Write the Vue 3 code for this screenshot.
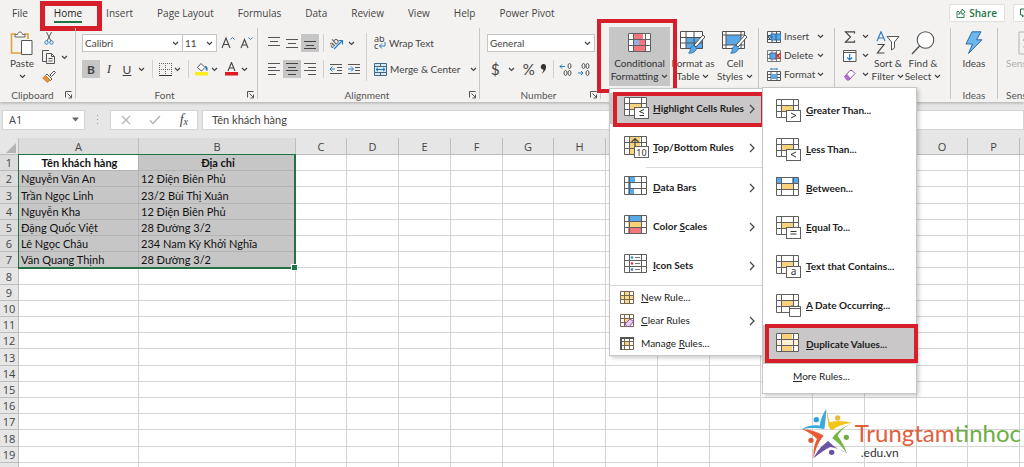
<script setup>
import { ref } from 'vue'

const tabs = ['File', 'Home', 'Insert', 'Page Layout', 'Formulas', 'Data', 'Review', 'View', 'Help', 'Power Pivot']
const columns = 'ABCDEFGHIJKLMNOPQR'.split('')
const records = [
  ['Tên khách hàng', 'Địa chỉ'],
  ['Nguyễn Văn An', '12 Điện Biên Phủ'],
  ['Trần Ngọc Linh', '23/2 Bùi Thị Xuân'],
  ['Nguyễn Kha', '12 Điện Biên Phủ'],
  ['Đặng Quốc Việt', '28 Đường 3/2'],
  ['Lê Ngọc Châu', '234 Nam Kỳ Khởi Nghĩa'],
  ['Văn Quang Thịnh', '28 Đường 3/2'],
]
const rowCount = 20
const formula = ref('Tên khách hàng')
const cellName = ref('A1')

const Y = '#fbd27c'
const B = '#5aa9e6'
const R = '#f4777f'
const base = [[5, 6, 12, 6, Y]]

const ruleItems = [
  { pre: '', key: 'H', post: 'ighlight Cells Rules', fills: base, badge: 'le', more: true, active: true },
  { pre: '', key: 'T', post: 'op/Bottom Rules', fills: [[6, 0, 10, 18, Y]], badge: '10', arrow: true, more: true },
  { pre: '', key: 'D', post: 'ata Bars', fills: [[4, 0, 7, 6, B], [4, 6, 3, 6, B], [4, 12, 6, 6, B]], more: true, sep: true },
  { pre: 'Color ', key: 'S', post: 'cales', fills: [[4, 0, 14, 6, B], [4, 6, 14, 6, Y], [4, 12, 14, 6, R]], more: true },
  { pre: '', key: 'I', post: 'con Sets', fills: [[4, 0, 14, 18, '#fff']], dots: true, more: true },
]
const smallItems = [
  { pre: '', key: 'N', post: 'ew Rule...', kind: 'new' },
  { pre: '', key: 'C', post: 'lear Rules', kind: 'clear', more: true },
  { pre: 'Manage ', key: 'R', post: 'ules...', kind: 'manage' },
]
const highlightItems = [
  { key: 'G', post: 'reater Than...', fills: base, badge: 'gt' },
  { key: 'L', post: 'ess Than...', fills: base, badge: 'lt' },
  { key: 'B', post: 'etween...', fills: [[0, 0, 6, 6, B], [16, 0, 6, 6, B], [5, 6, 12, 6, Y]] },
  { key: 'E', post: 'qual To...', fills: base, badge: 'eq' },
  { key: 'T', post: 'ext that Contains...', fills: base, badge: 'a' },
  { key: 'A', post: ' Date Occurring...', fills: base, badge: 'date' },
  { key: 'D', post: 'uplicate Values...', fills: [[6, 0, 10, 6, Y], [6, 12, 10, 6, Y], [0, 6, 22, 6, '#fdf1d8']], active: true },
]
const badgePaths = {
  le: 'M20 12.5l-4.500 2 4.500 2M15.500 18.500h4.500',
  gt: 'M15 13l5 2.500-5 2.500',
  lt: 'M20 13l-5 2.500 5 2.500',
  eq: 'M14.500 14.500h6M14.500 17h6',
}
</script>

<template>
  <div class="app">
    <svg class="defs" aria-hidden="true">
      <symbol id="chev" viewBox="0 0 7 5"><path d="M1 1l2.500 2.500L6 1" fill="none" stroke="#444" stroke-width="1.200" /></symbol>
      <symbol id="launch" viewBox="0 0 8 8"><path d="M.5 6.500v-6h6M2.500 2.500l4 4M6.500 3.500v3.500H3.500" fill="none" stroke="#555" /></symbol>
      <symbol id="cells" viewBox="0 0 23 19">
        <path d="M.5.5h22v18H.5zM.5 6.500h22M.5 12.500h22M5.500.5v18M17.500.5v18" fill="none" stroke="#5f5f5f" />
      </symbol>
    </svg>

    <header class="ribbon">
      <nav class="tabs">
        <button v-for="t in tabs" :key="t" class="tab" :class="{ current: t === 'Home' }">
          {{ t }}<span v-if="t === 'Home'" class="mark home-mark"></span>
        </button>
        <span class="grow"></span>
        <button class="share">
          <svg width="10" height="10" viewBox="0 0 10 10"><path d="M3 3.500H1v6h7V6M2.800 6.500C3 4 4.500 3 6 3V1l3.200 3L6 6.500V4.700C4.500 4.700 3.500 5.200 2.800 6.500z" fill="none" stroke="#217346" stroke-width=".9" /></svg>
          Share
        </button>
        <button class="share comments" aria-label="Comments">
          <svg width="10" height="10" viewBox="0 0 10 10"><path d="M.5 1h9v6H4.500l-2 2V7H.5z" fill="none" stroke="#217346" /></svg>
        </button>
      </nav>

      <div class="groups">
        <section class="group clipboard">
          <div class="body">
            <button class="big">
              <svg width="24" height="24" viewBox="0 0 24 24">
                <path d="M6 3H1.500v19H11" fill="none" stroke="#e2a33a" stroke-width="1.600" />
                <path d="M14 3h4v5" fill="none" stroke="#e2a33a" stroke-width="1.600" />
                <path d="M5 6V3.500h2.500C8 .2 12 .2 12.500 3.500H15V6z" fill="#f8f8f8" stroke="#666" />
                <path d="M11.500 9.500h10.500v14H11.500z" fill="#fff" stroke="#555" />
              </svg>
              <span>Paste</span>
              <svg class="chev"><use href="#chev" /></svg>
            </button>
            <div class="stack">
              <button aria-label="Cut"><svg width="14" height="13" viewBox="0 0 14 13"><path d="M4.500 0l4.500 9M9.500 0L5 9" stroke="#555" fill="none" /><circle cx="4.500" cy="10.500" r="1.700" fill="none" stroke="#2b7cc4" /><circle cx="9.500" cy="10.500" r="1.700" fill="none" stroke="#2b7cc4" /></svg></button>
              <button aria-label="Copy"><svg width="14" height="14" viewBox="0 0 14 14"><path d="M4.500 11.500h-4V.5H7M4.500 3.500h5l3 3v7h-8z" fill="none" stroke="#555" /><path d="M9.500 3.500v3h3M6.500 8.500h4M6.500 11h4" fill="none" stroke="#555" /></svg><svg class="chev"><use href="#chev" /></svg></button>
              <button aria-label="Format Painter"><svg width="14" height="13" viewBox="0 0 14 13"><path d="M8 5l4-4 1.500 1.500-4 4z" fill="#fff" stroke="#555" /><path d="M5 4l5 5-1.500 1.500-5-5z" fill="#fff" stroke="#555" /><path d="M3.500 5.500L.8 8l4.500 4.500 2.700-2.300z" fill="#e8923a" stroke="#d97f24" /></svg></button>
            </div>
          </div>
          <footer><span>Clipboard</span><svg class="launch"><use href="#launch" /></svg></footer>
        </section>

        <section class="group font">
          <div class="body lines">
            <div class="line fields">
              <label class="combo face"><select aria-label="Font"><option>Calibri</option></select><svg class="chev"><use href="#chev" /></svg></label>
              <label class="combo size"><select aria-label="Font size"><option>11</option></select><svg class="chev"><use href="#chev" /></svg></label>
              <button class="grow-a" aria-label="Increase font size"><svg width="14" height="14" viewBox="0 0 14 14"><path d="M1 12L5 2l4 10M2.500 8.500h5" fill="none" stroke="#444" stroke-width="1.100" /><path d="M9.500 3.500L11.500 1.500l2 2" fill="none" stroke="#2b7cc4" /></svg></button>
              <button aria-label="Decrease font size"><svg width="13" height="14" viewBox="0 0 13 14"><path d="M1 12L4.500 3.500 8 12M2.500 9h4" fill="none" stroke="#444" stroke-width="1.100" /><path d="M8.500 1.500l2 2 2-2" fill="none" stroke="#2b7cc4" /></svg></button>
            </div>
            <div class="line font-tools">
              <button class="sq on bold">B</button>
              <button class="sq italic">I</button>
              <button class="sq under">U</button>
              <svg class="chev"><use href="#chev" /></svg>
              <i class="rule"></i>
              <button aria-label="Borders"><svg width="13" height="13" viewBox="0 0 13 13"><path d="M.5 0v12M12.500 0v12M0 .5h13M0 6.500h13M6.500 0v12" fill="none" stroke="#666" stroke-dasharray="1 1" /><path d="M0 12.500h13" stroke="#333" /></svg></button>
              <svg class="chev"><use href="#chev" /></svg>
              <i class="rule"></i>
              <button aria-label="Fill color"><svg width="14" height="14" viewBox="0 0 14 14"><path d="M6 1.500L10 5.500 6.500 9 2.500 5.500z" fill="#fff" stroke="#555" /><path d="M10 4.500c2 .5 2 2 1.500 4" fill="none" stroke="#2b7cc4" stroke-width="1.800" /><path d="M0 10h13v3.500H0z" fill="#f8ee1c" /></svg></button>
              <svg class="chev"><use href="#chev" /></svg>
              <button aria-label="Font color"><svg width="14" height="14" viewBox="0 0 14 14"><path d="M3 9l3.500-8.500L10 9M4.200 6h4.600" fill="none" stroke="#444" stroke-width="1.100" /><path d="M0 10h13v3.500H0z" fill="#e01b24" /></svg></button>
              <svg class="chev"><use href="#chev" /></svg>
            </div>
          </div>
          <footer><span>Font</span><svg class="launch"><use href="#launch" /></svg></footer>
        </section>

        <section class="group align">
          <div class="body">
            <div class="lines">
              <div class="line">
                <button class="sq" aria-label="Top align"><svg width="12" height="12" viewBox="0 0 12 12"><path d="M0 .5h12M2 4.500h8M0 8.500h12" stroke="#555" /></svg></button>
                <button class="sq" aria-label="Middle align"><svg width="12" height="12" viewBox="0 0 12 12"><path d="M0 2.500h12M2 6.500h8M0 10.500h12" stroke="#555" /></svg></button>
                <button class="sq on" aria-label="Bottom align"><svg width="12" height="12" viewBox="0 0 12 12"><path d="M0 4.500h12M2 8.500h8M0 11.500h12" stroke="#444" /></svg></button>
                <i class="rule"></i>
                <button aria-label="Orientation"><svg width="14" height="14" viewBox="0 0 14 14"><text x="-1" y="9" transform="rotate(-40 5 7)" font-family="Noto Sans" font-size="9" fill="#444">ab</text><path d="M4 13L12 5M12.500 8.500V4.500H8.500" fill="none" stroke="#2b7cc4" stroke-width="1.200" /></svg></button>
                <svg class="chev"><use href="#chev" /></svg>
              </div>
              <div class="line">
                <button class="sq" aria-label="Align left"><svg width="12" height="12" viewBox="0 0 12 12"><path d="M0 .5h12M0 4.500h8M0 7.500h12M0 11.500h8" stroke="#555" /></svg></button>
                <button class="sq on" aria-label="Center"><svg width="12" height="12" viewBox="0 0 12 12"><path d="M0 .5h12M2 4.500h8M0 7.500h12M2 11.500h8" stroke="#444" /></svg></button>
                <button class="sq" aria-label="Align right"><svg width="12" height="12" viewBox="0 0 12 12"><path d="M0 .5h12M4 4.500h8M0 7.500h12M4 11.500h8" stroke="#555" /></svg></button>
                <i class="rule"></i>
                <button class="indent" aria-label="Decrease indent"><svg width="12" height="12" viewBox="0 0 12 12"><path d="M0 1.500h12M7 4.500h5M7 7.500h5M0 10.500h12" stroke="#555" /><path d="M0 6h5M2.500 3.500L0 6l2.500 2.500" fill="none" stroke="#2b7cc4" /></svg></button>
                <button class="indent" aria-label="Increase indent"><svg width="12" height="12" viewBox="0 0 12 12"><path d="M0 1.500h12M7 4.500h5M7 7.500h5M0 10.500h12" stroke="#555" /><path d="M0 6h5M3 3.500L5.500 6 3 8.500" fill="none" stroke="#2b7cc4" /></svg></button>
              </div>
            </div>
            <i class="rule tall"></i>
            <div class="lines wide">
              <button class="line label"><svg width="12" height="14" viewBox="0 0 12 14"><text x="0" y="6" font-family="Noto Sans" font-size="9" fill="#444">ab</text><text x="0" y="13" font-family="Noto Sans" font-size="9" fill="#444">c</text><path d="M11 6v4H5.500M8 7.500L5.500 10 8 12.500" fill="none" stroke="#2b7cc4" /></svg>Wrap Text</button>
              <button class="line label"><svg width="13" height="13" viewBox="0 0 13 13"><path d="M.5.5h12v12H.5zM.5 3.500h12M.5 9.500h12M6.500.5v3M6.500 9.500v3" fill="#d6ebfa" stroke="#44687f" /><path d="M2 6.500h9M4 4.800L2 6.500l2 1.700M9 4.800l2 1.700-2 1.700" fill="none" stroke="#1f74b8" /></svg>Merge &amp; Center<svg class="chev far"><use href="#chev" /></svg></button>
            </div>
          </div>
          <footer><span>Alignment</span><svg class="launch"><use href="#launch" /></svg></footer>
        </section>

        <section class="group number">
          <div class="body lines">
            <div class="line fields"><label class="combo general"><select aria-label="Number format"><option>General</option></select><svg class="chev"><use href="#chev" /></svg></label></div>
            <div class="line number-tools">
              <button class="sym">$</button>
              <svg class="chev"><use href="#chev" /></svg>
              <button class="sym">%</button>
              <button aria-label="Comma style"><svg width="8" height="12" viewBox="0 0 8 12"><path d="M3.500 1C7 .8 7.500 7 1.500 11c1.500-2 2-3 1.800-4.500C-.2 6.500 0 1.200 3.500 1z" fill="#333" /></svg></button>
              <i class="rule"></i>
              <button aria-label="Increase decimal"><svg width="13" height="13" viewBox="0 0 13 13"><path d="M1 3.500h5M3 1.500l-2 2 2 2" fill="none" stroke="#2b7cc4" /><g fill="none" stroke="#555"><ellipse cx="10.500" cy="3" rx="1.500" ry="2.500" /><ellipse cx="6.500" cy="10" rx="1.500" ry="2.500" /><ellipse cx="10.500" cy="10" rx="1.500" ry="2.500" /></g></svg></button>
              <button aria-label="Decrease decimal"><svg width="13" height="13" viewBox="0 0 13 13"><path d="M1 10h5M4 8l2 2-2 2" fill="none" stroke="#2b7cc4" /><g fill="none" stroke="#555"><ellipse cx="10.500" cy="3" rx="1.500" ry="2.500" /><ellipse cx="6.500" cy="3" rx="1.500" ry="2.500" /><ellipse cx="10.500" cy="10" rx="1.500" ry="2.500" /></g></svg></button>
            </div>
          </div>
          <footer><span>Number</span><svg class="launch"><use href="#launch" /></svg></footer>
        </section>

        <section class="group styles">
          <div class="body">
            <div class="anchor">
              <button class="big cf on">
                <svg width="23" height="19" viewBox="0 0 23 19"><path d="M0 0h23v19H0z" fill="#fff" /><path d="M5 0h10v6H5zM11 6h6v6h-6zM5 12h12v6H5z" fill="#f4777f" /><path d="M5 6h6v6H5z" fill="#8fb3e0" /><use href="#cells" /></svg>
                <span>Conditional</span>
                <span>Formatting <svg class="chev"><use href="#chev" /></svg></span>
              </button>

              <div class="menu rules" role="menu">
                <template v-for="m in ruleItems" :key="m.post">
                  <hr v-if="m.sep" class="inset" />
                  <button class="item" :class="{ hot: m.active }" role="menuitem">
                    <svg class="pic" viewBox="0 0 25 23">
                      <path d="M0 0h23v19H0z" fill="#fff" />
                      <rect v-for="(f, i) in m.fills" :key="i" :x="f[0]" :y="f[1]" :width="f[2]" :height="f[3]" :fill="f[4]" />
                      <use href="#cells" width="23" height="19" />
                      <path v-if="m.arrow" d="M11 13V3M7.500 6L11 2.500 14.500 6" fill="none" stroke="#444" stroke-width="1.200" />
                      <g v-if="m.dots"><path d="M6 1h11v5H6zM6 7h11v5H6zM6 13h11v5H6z" fill="#fff" /><path d="M11 3.500h5M11 9.500h5M11 15.500h5" stroke="#777" /><circle cx="8" cy="3.500" r="1.300" fill="#2b8cc4" /><circle cx="8" cy="9.500" r="1.300" fill="#d9303a" /><circle cx="8" cy="15.500" r="1.300" fill="#2b7cc4" /></g>
                      <rect v-if="m.badge" x="10.500" y="10.500" width="14" height="11" fill="#fff" stroke="#5f5f5f" />
                      <path v-if="m.badge === 'le'" :d="badgePaths.le" fill="none" stroke="#333" />
                      <text v-if="m.badge === '10'" x="17.500" y="19.500" text-anchor="middle" font-family="Noto Sans" font-weight="400" font-size="9" fill="#333">10</text>
                    </svg>
                    <span>{{ m.pre }}<u>{{ m.key }}</u>{{ m.post }}</span>
                    <svg v-if="m.more" class="go" viewBox="0 0 6 10"><path d="M1 1l4 4-4 4" fill="none" stroke="#444" stroke-width="1.200" /></svg>
                  </button>
                </template>
                <hr />
                <button v-for="m in smallItems" :key="m.post" class="item small" role="menuitem">
                  <svg class="mini" viewBox="0 0 14 13">
                    <path d="M.5.5h13v12H.5z" fill="#fff" /><path d="M4 4h6v5H4z" :fill="Y" />
                    <path v-if="m.kind === 'new'" d="M4 1h6v11H4zM1 4h12v5H1z" fill="#fbd98f" />
                    <path d="M.5.5h13v12H.5zM.5 4.500h13M.5 8.500h13M4.500.5v12M9.500.5v12" fill="none" stroke="#76664c" />
                    <path v-if="m.kind === 'manage'" d="M1 13V1h13" fill="none" stroke="#555" stroke-width="2" />
                    <path v-if="m.kind === 'clear'" d="M5 10l5-5 3.500 2.500-4 5H7z" fill="#e7cdf0" stroke="#9a49b5" />
                  </svg>
                  <span>{{ m.pre }}<u>{{ m.key }}</u>{{ m.post }}</span>
                  <svg v-if="m.more" class="go" viewBox="0 0 6 10"><path d="M1 1l4 4-4 4" fill="none" stroke="#444" stroke-width="1.200" /></svg>
                </button>
                <span class="mark rule-mark"></span>
              </div>

              <div class="menu conditions" role="menu">
                <button v-for="m in highlightItems" :key="m.post" class="item" :class="{ hot: m.active }" role="menuitem">
                  <svg class="pic" viewBox="0 0 25 23">
                    <path d="M0 0h23v19H0z" fill="#fff" />
                    <rect v-for="(f, i) in m.fills" :key="i" :x="f[0]" :y="f[1]" :width="f[2]" :height="f[3]" :fill="f[4]" />
                    <use href="#cells" width="23" height="19" />
                    <rect v-if="m.badge && m.badge !== 'date'" x="10.500" y="11.500" width="14" height="11" fill="#fff" stroke="#5f5f5f" />
                    <path v-if="badgePaths[m.badge]" :d="badgePaths[m.badge]" transform="translate(0 1)" fill="none" stroke="#333" />
                    <text v-if="m.badge === 'a'" x="17.500" y="20" text-anchor="middle" font-family="Noto Sans" font-weight="400" font-size="10" fill="#333">a</text>
                    <path v-if="m.badge === 'date'" d="M13.500 12.500h11v10h-11zM13.500 14.500h11M16 11v2M22 11v2" fill="#fff" stroke="#5f5f5f" />
                  </svg>
                  <span><u>{{ m.key }}</u>{{ m.post }}</span>
                  <span v-if="m.active" class="mark dup-mark"></span>
                </button>
                <button class="item small more" role="menuitem"><span><u>M</u>ore Rules...</span></button>
              </div>
            </div>
            <button class="big fat">
              <svg width="26" height="24" viewBox="0 0 26 24"><path d="M.5.5h22v17H.5z" fill="#fff" /><path d="M6 6h17v12H6z" fill="#5aa9e6" /><path d="M.5.5h22v17H.5zM.5 6.500h22M.5 12h22M6 .5v17M14 .5v17" fill="none" stroke="#505050" /><path d="M25 6L16 16l-2-2 9-10z" fill="#fff" stroke="#505050" /><path d="M14 14.500l2.500 2.500c0 3-4 6-8 5 2-1 1.500-2.500 2-5 .5-1.500 2-2.500 3.500-2.500z" fill="#5aa9e6" stroke="#2569a5" stroke-width=".8" /></svg>
              <span>Format as</span>
              <span>Table <svg class="chev"><use href="#chev" /></svg></span>
            </button>
            <button class="big cs">
              <svg width="26" height="24" viewBox="0 0 26 24"><path d="M.5.5h22v17H.5z" fill="#fff" /><path d="M4 4h15v10H4z" fill="#5aa9e6" /><path d="M.5.5h22v17H.5zM.5 4h22M.5 14h22M4 .5v17M19 .5v17" fill="none" stroke="#505050" /><path d="M25 6L16 16l-2-2 9-10z" fill="#fff" stroke="#505050" /><path d="M14 14.500l2.500 2.500c0 3-4 6-8 5 2-1 1.500-2.500 2-5 .5-1.500 2-2.500 3.500-2.500z" fill="#5aa9e6" stroke="#2569a5" stroke-width=".8" /></svg>
              <span>Cell</span>
              <span>Styles <svg class="chev"><use href="#chev" /></svg></span>
            </button>
          </div>
          <span class="mark cf-mark"></span>
        </section>

        <section class="group cellsg">
          <div class="body stack3">
            <button class="label"><svg width="14" height="12" viewBox="0 0 14 12"><path d="M.5.5h13v11H.5zM.5 4.500h13M.5 8.500h13M5 .5v11M9.500.5v11" fill="#fff" stroke="#555" /><path d="M4 3h10v6H4z" fill="#5aa9e6" stroke="#2f6da3" /><path d="M6 6h-5M3 4L1 6l2 2M9 3v6" fill="none" stroke="#1f5f9a" /></svg><span class="w">Insert</span><svg class="chev"><use href="#chev" /></svg></button>
            <button class="label"><svg width="14" height="12" viewBox="0 0 14 12"><path d="M.5.5h13v11H.5zM.5 4.500h13M.5 8.500h13M5 .5v11M9.500.5v11" fill="#fff" stroke="#777" /><path d="M3 3h6v6H3z" fill="#5aa9e6" stroke="#2f6da3" /><path d="M8.500 3l5 6M13.500 3l-5 6" stroke="#d9303a" stroke-width="1.400" /></svg><span class="w">Delete</span><svg class="chev"><use href="#chev" /></svg></button>
            <button class="label"><svg width="14" height="14" viewBox="0 0 14 14"><path d="M.5 3.500h13v9H.5zM.5 6.500h13M.5 9.500h13M4 3v10M10 3v10" fill="#fff" stroke="#555" /><path d="M4 6h6v5H4z" fill="#5aa9e6" /><path d="M4 1h6M4 0v2M10 0v2" stroke="#2b7cc4" /></svg><span class="w">Format</span><svg class="chev"><use href="#chev" /></svg></button>
          </div>
        </section>

        <section class="group editing">
          <div class="body">
            <div class="stack3">
              <button aria-label="AutoSum"><svg width="14" height="12" viewBox="0 0 14 12"><path d="M11.500 2.500V.8H2.500L7.500 6l-5 5.200h9V9.500" fill="none" stroke="#444" stroke-width="1.200" /></svg><svg class="chev"><use href="#chev" /></svg></button>
              <button aria-label="Fill"><svg width="14" height="12" viewBox="0 0 14 12"><path d="M.5.500h12.500v11H.5zM.5 2.500h12.500" fill="#fff" stroke="#555" /><path d="M6.700 4v6M4.200 7.500L6.700 10l2.500-2.500" fill="none" stroke="#2b7cc4" stroke-width="1.200" /></svg><svg class="chev"><use href="#chev" /></svg></button>
              <button aria-label="Clear"><svg width="14" height="12" viewBox="0 0 14 12"><path d="M1.500 7.500L7 1.500h2l3 3-6 6.500H4z" fill="#fff" stroke="#8c4fa5" /><path d="M1.500 7.500L4 5l3.500 4L6 11H4z" fill="#b469cf" /></svg><svg class="chev"><use href="#chev" /></svg></button>
            </div>
            <button class="big sort">
              <svg width="24" height="24" viewBox="0 0 24 24"><path d="M1 10L5 .8l4 9.200M2.400 7h5.200" fill="none" stroke="#2b7cc4" stroke-width="1.200" /><path d="M1.500 13.500h6.500l-6.500 8.500h7" fill="none" stroke="#444" stroke-width="1.200" /><path d="M11 5.500h12l-4.500 5.500v6l-3 2v-8z" fill="#fff" stroke="#555" /></svg>
              <span>Sort &amp;</span>
              <span>Filter <svg class="chev"><use href="#chev" /></svg></span>
            </button>
            <button class="big find">
              <svg width="24" height="24" viewBox="0 0 24 24"><circle cx="14.500" cy="9" r="8.300" fill="#fff" stroke="#555" stroke-width="1.100" /><path d="M8.500 15L1 23" stroke="#555" stroke-width="1.400" /></svg>
              <span>Find &amp;</span>
              <span>Select <svg class="chev"><use href="#chev" /></svg></span>
            </button>
          </div>
        </section>

        <section class="group ideas">
          <div class="body"><button class="big"><svg width="18" height="24" viewBox="0 0 18 24"><path d="M7 .8h9l-4.500 8H17L3.500 22.500l4-9.500H1z" fill="#6db7f0" stroke="#2b6ca8" /></svg><span>Ideas</span></button></div>
          <footer><span>Ideas</span></footer>
        </section>

        <section class="group sens">
          <div class="body"><button class="big off"><svg width="22" height="24" viewBox="0 0 22 24"><path d="M1 1h20v22H1zM5 9l4-3M5 9l4 3M5 16h12" fill="none" stroke="#b5b3b1" /></svg><span>Sensitivity</span></button></div>
          <footer><span>Sensitivity</span></footer>
        </section>
      </div>
    </header>

    <div class="formula-bar">
      <label class="name"><input v-model="cellName" aria-label="Name box" /><svg width="7" height="5" viewBox="0 0 7 5"><path d="M0 .5h7L3.500 4.500z" fill="#666" /></svg></label>
      <svg class="grip" width="3" height="12" viewBox="0 0 3 12"><path d="M1 1h1v1H1zM1 5h1v1H1zM1 9h1v1H1z" fill="#999" /></svg>
      <div class="fx">
        <svg width="10" height="10" viewBox="0 0 10 10"><path d="M1 1l8 8M9 1L1 9" stroke="#b5b5b5" stroke-width="1.300" /></svg>
        <svg width="12" height="10" viewBox="0 0 12 10"><path d="M1 5.500l3 3L11 1" fill="none" stroke="#b5b5b5" stroke-width="1.500" /></svg>
        <button aria-label="Insert function"><em>f</em><em class="sub">x</em></button>
      </div>
      <input v-model="formula" class="formula" aria-label="Formula bar" />
    </div>

    <main class="sheet">
      <table>
        <colgroup><col class="c-num" /><col class="c-a" /><col class="c-b" /><col v-for="c in columns.slice(2)" :key="c" class="c-n" /></colgroup>
        <thead>
          <tr><th class="corner"><svg width="10" height="10" viewBox="0 0 10 10"><path d="M10 0v10H0z" fill="#b4b4b4" /></svg></th><th v-for="(c, i) in columns" :key="c" :class="{ sel: i < 2 }">{{ c }}</th></tr>
        </thead>
        <tbody>
          <tr v-for="r in rowCount" :key="r">
            <th :class="{ sel: r < 8 }">{{ r }}</th>
            <td v-for="(c, i) in columns" :key="c" :class="{ sel: r < 8 && i < 2, head: r === 1, active: r === 1 && i === 0 }">{{ i < 2 && r < 8 ? records[r - 1][i] : '' }}</td>
          </tr>
        </tbody>
      </table>
      <div class="range"></div>
      <div class="logo">
        <svg width="54" height="52" viewBox="0 0 162 156">
          <path d="M2 66C24 54 42 54 56 56 60 34 66 20 76 6 74 28 74 46 70 66 50 62 26 62 2 66z" fill="#3aa9dd" />
          <path d="M76 6c4 16 8 30 10 40 22-6 44-6 68 2-24 2-44 8-60 22-6-4-10-8-12-14C80 40 78 22 76 6z" fill="#f2c51b" />
          <path d="M154 48c-22 10-36 24-44 38 12 16 22 34 28 54-14-20-26-34-44-46 10-18 32-34 60-46z" fill="#73b843" />
          <path d="M138 138c-18-10-34-16-50-18-18 8-34 20-50 34 10-22 24-38 44-52 12 14 30 26 56 36z" fill="#6d54a3" />
          <path d="M38 154c-2-24 2-42 10-58C36 84 20 74 2 66c26 2 46 8 66 20-16 18-24 38-30 68z" fill="#ea5a33" />
          <g><circle cx="46" cy="38" r="8" fill="#2ba3d8" /><circle cx="110" cy="33" r="8" fill="#e9b93a" /><circle cx="136" cy="91" r="8" fill="#6fae45" /><circle cx="92" cy="136" r="8" fill="#6a4fa0" /><circle cx="30" cy="100" r="8" fill="#d95a38" /></g>
        </svg>
        <p class="brand"><span class="name-line"><b>Trungtam</b><b class="green">tinhoc</b></span><span class="domain">.edu.vn</span></p>
      </div>
    </main>
  </div>
</template>

<style>
html, body { height: 100%; overflow: hidden; }
#app { height: 100%; }
</style>

<style scoped>
.app { display: flex; flex-direction: column; height: 100vh; overflow: hidden; background: #e6e6e6; color: #444; font: 10px/13px "Open Sans", "Noto Sans", sans-serif; }
.app * { box-sizing: border-box; }
.defs { position: absolute; width: 0; height: 0; }
svg { flex: none; display: block; }
button { display: flex; align-items: center; margin: 0; padding: 0; border: 0; background: none; color: inherit; font: inherit; white-space: nowrap; }
input, select { margin: 0; border: 0; background: transparent; color: inherit; font: inherit; outline: 0; appearance: none; }
.grow { flex: 1; }
.mark { position: absolute; border: 4px solid #d61f2b; pointer-events: none; }
.chev { width: 7px; height: 5px; }
.launch { width: 8px; height: 8px; }

.ribbon { position: relative; z-index: 2; flex: none; background: #f3f2f1; box-shadow: 0 1px 3px #0004; }
.tabs { display: flex; align-items: center; height: 26px; padding: 0 0 0 12px; gap: 24px; }
.tab { position: relative; height: 24px; }
.tab:first-child { margin-right: 2px; }
.tab.current { color: #222; }
.tab.current::after { content: ""; position: absolute; left: 0; right: 0; bottom: 2px; height: 2px; background: #217346; }
.home-mark { inset: 0 -20px -6px -14px; border-width: 5px; }
.share { height: 18px; padding: 0 7px 0 6px; gap: 3px; border: 1px solid #e1dfdd; border-radius: 1px; background: #fff; color: #217346; font-weight: 600; }
.comments { margin: 0 -15px 0 -16px; width: 26px; }

.groups { display: flex; height: 76px; padding-top: 2px; font-family: Lato, "Open Sans", sans-serif; }
.group { position: relative; display: flex; flex-direction: column; flex: none; height: 71px; border-right: 1px solid #c8c6c4; }
.body { display: flex; flex: 1; }
.group footer { display: flex; align-items: center; height: 12px; margin-bottom: -2px; padding-right: 2px; color: #555; }
.group footer span { flex: 1; text-align: center; }
.big { flex-direction: column; }
.big > svg:first-child { height: 24px; margin: 3px 0 2px; }
.big > span { display: flex; align-items: center; gap: 3px; height: 13px; }
.lines { display: flex; flex-direction: column; padding-top: 6px; gap: 8px; }
.line { display: flex; align-items: center; height: 18px; }
.sq { justify-content: center; width: 18px; height: 18px; }
.on { background: #c6c6c6; }
.rule { width: 1px; height: 18px; background: #d2d0ce; }
.label { gap: 3px; }

.clipboard { width: 76px; }
.clipboard .big { width: 42px; padding-left: 2px; }
.clipboard .big .chev { margin-top: 4px; }
.clipboard .stack { display: flex; flex-direction: column; padding: 3px 0 0; gap: 5px; }
.clipboard .stack button { gap: 5px; height: 14px; }
.font { width: 182px; padding-left: 6px; }
.combo { position: relative; display: flex; align-items: center; height: 18px; border: 1px solid #c8c6c4; background: #fff; }
.combo select { width: 100%; padding: 0 0 0 2px; }
.combo .chev { position: absolute; right: 3px; }
.face { width: 101px; }
.size { width: 35px; margin-left: -1px; }
.grow-a { margin: 0 5px 0 4px; }
.font-tools > .chev { margin: 0 7px 0 2px; }
.font-tools .rule { margin-right: 6px; }
.bold { font-weight: 700; font-size: 12px; }
.italic { font: italic 13px "Liberation Serif", serif; }
.under { text-decoration: underline; font-size: 12px; }
.align { width: 222px; padding-left: 7px; }
.align .rule { margin: 0 6px 0 4px; }
.align .rule.tall { height: 48px; margin: 5px 7px 0 0; }
.align .chev { margin-left: 4px; }
.align .indent { margin-right: 6px; }
.align .chev.far { margin-left: 7px; }
.number { width: 121px; padding-left: 7px; }
.general { width: 108px; }
.number-tools { gap: 5px; padding-left: 4px; }
.number-tools .chev { margin: 0 3px; }
.sym { font-size: 15px; }
.styles { width: 158px; padding-left: 8px; }
.anchor { position: relative; }
.cf { width: 61px; height: 59px; margin-top: -1px; color: #333; }
.cf > svg:first-child { height: 19px; margin: 6px 0 5px; }
.fat { width: 46px; }
.cs { width: 38px; }
.cf-mark { inset: -9px auto auto -4px; width: 80px; height: 74px; }
.cellsg { width: 76px; padding-left: 8px; }
.stack3 { display: flex; flex-direction: column; padding-top: 1px; gap: 4px; }
.stack3 button { height: 15px; }
.cellsg .w { width: 30px; text-align: left; }
.editing { width: 116px; padding-left: 8px; }
.editing .stack3 { width: 28px; }
.editing .stack3 button { gap: 5px; }
.sort { width: 34px; }
.find { width: 36px; }
.ideas { width: 47px; }
.ideas .body { justify-content: center; }
.ideas footer { padding: 0; }
.sens { flex: 1 0 27px; min-width: 0; overflow: hidden; padding-left: 8px; height: 73px; border: 0; }
.sens footer { margin: 0; }
.sens footer span { text-align: left; }
.off { color: #b0aeac; }

.menu { position: absolute; z-index: 3; display: flex; flex-direction: column; border: 1px solid #c6c6c6; background: #fff; box-shadow: 2px 2px 4px #0003; color: #222; }
.rules { top: 60px; left: 0; width: 154px; }
.conditions { top: 59px; left: 153px; width: 155px; padding: 3px 0 4px; }
.item { position: relative; height: 39px; padding: 0 7px 0 14px; gap: 4px; font-weight: 700; }
.conditions .item { padding-left: 13px; gap: 5px; }
.item .pic { width: 25px; height: 23px; }
.item > span:not(.mark) { flex: 1; text-align: left; }
.item u { text-underline-offset: 1px; }
.go { width: 6px; height: 10px; }
.rules .hot, .conditions .hot { background: #c9c7c7; }
.rules .hot { height: 31px; margin: 4px 0; }
.rules hr { height: 1px; margin: 0; border: 0; background: #d8d8d8; flex: none; width: 100%; }
.rules hr.inset { width: auto; margin-left: 36px; }
.item.small { height: 23px; padding-left: 10px; gap: 7px; font-weight: 400; }
.mini { width: 14px; height: 13px; }
.conditions .more { padding-left: 30px; height: 25px; }
.rule-mark { top: 3px; left: 3px; width: 152px; height: 35px; }
.dup-mark { inset: -1px -2px 1px 2px; }

.formula-bar { display: flex; align-items: center; flex: none; height: 36px; padding: 0 0 1px 2px; font-size: 11px; }
.name { display: flex; align-items: center; width: 83px; height: 20px; padding: 0 5px 0 6px; border: 1px solid #d4d4d4; background: #fff; }
.name input { flex: 1; width: 40px; min-width: 0; padding: 0; }
.grip { margin: 0 11px; }
.fx { display: flex; align-items: center; justify-content: space-between; width: 88px; height: 20px; padding: 0 9px 0 10px; border: 1px solid #d4d4d4; background: #fff; }
.fx em { font: italic 14px "Liberation Serif", serif; }
.fx .sub { font-size: 10px; padding-top: 3px; }
.formula { flex: 1; height: 20px; margin-left: 4px; padding: 0 9px; border: 1px solid #d4d4d4; background: #fff; font-family: Lato, "Open Sans", sans-serif; }

.sheet { position: relative; flex: 1; min-height: 0; overflow: hidden; background: #fff; font-size: 11px; }
table { table-layout: fixed; width: 1124px; border-collapse: separate; border-spacing: 0; }
.c-num { width: 19px; }
.c-a { width: 120px; }
.c-b { width: 157px; }
.c-n { width: 52px; }
.c-n:nth-child(4n) { width: 51px; }
th, td { height: 16px; padding: 0; border: solid #d4d4d4; border-width: 0 1px 1px 0; line-height: 15px; white-space: nowrap; overflow: hidden; }
tbody tr:nth-child(5n-2) > * { height: 17px; }
thead th { height: 17px; background: #e6e6e6; border-color: #bdbdbd; font-weight: 400; }
tbody th { background: #e6e6e6; border-color: #bdbdbd; font-weight: 400; }
th.sel { background: #dcdcdc; }
.corner svg { margin: 3px 0 0 6px; }
td { padding-left: 2px; color: #111; font-family: Lato, "Open Sans", sans-serif; }
td.sel { background: #c6c6c6; border-color: #b4b4b4; }
td.head { text-align: center; font-weight: 700; }
td.active { background: #fff; }
.range { position: absolute; top: 16px; left: 18px; width: 278px; height: 115px; border: 2px solid #217346; border-width: 1px 2px 2px 1px; }
.range::after { content: ""; position: absolute; right: -3px; bottom: -3px; width: 5px; height: 5px; background: #217346; outline: 1px solid #fff; }
.logo { position: absolute; right: 3px; bottom: 8px; display: flex; align-items: flex-start; }
.brand { display: flex; flex-direction: column; margin: 0; padding-top: 13px; font-family: Lato, sans-serif; }
.name-line { font-size: 24px; line-height: 26px; }
.name-line b { font-weight: 400; color: #e0603c; }
.name-line .green { color: #6fae45; }
.domain { padding-left: 6px; font-size: 12px; line-height: 13px; color: #333; }
</style>
